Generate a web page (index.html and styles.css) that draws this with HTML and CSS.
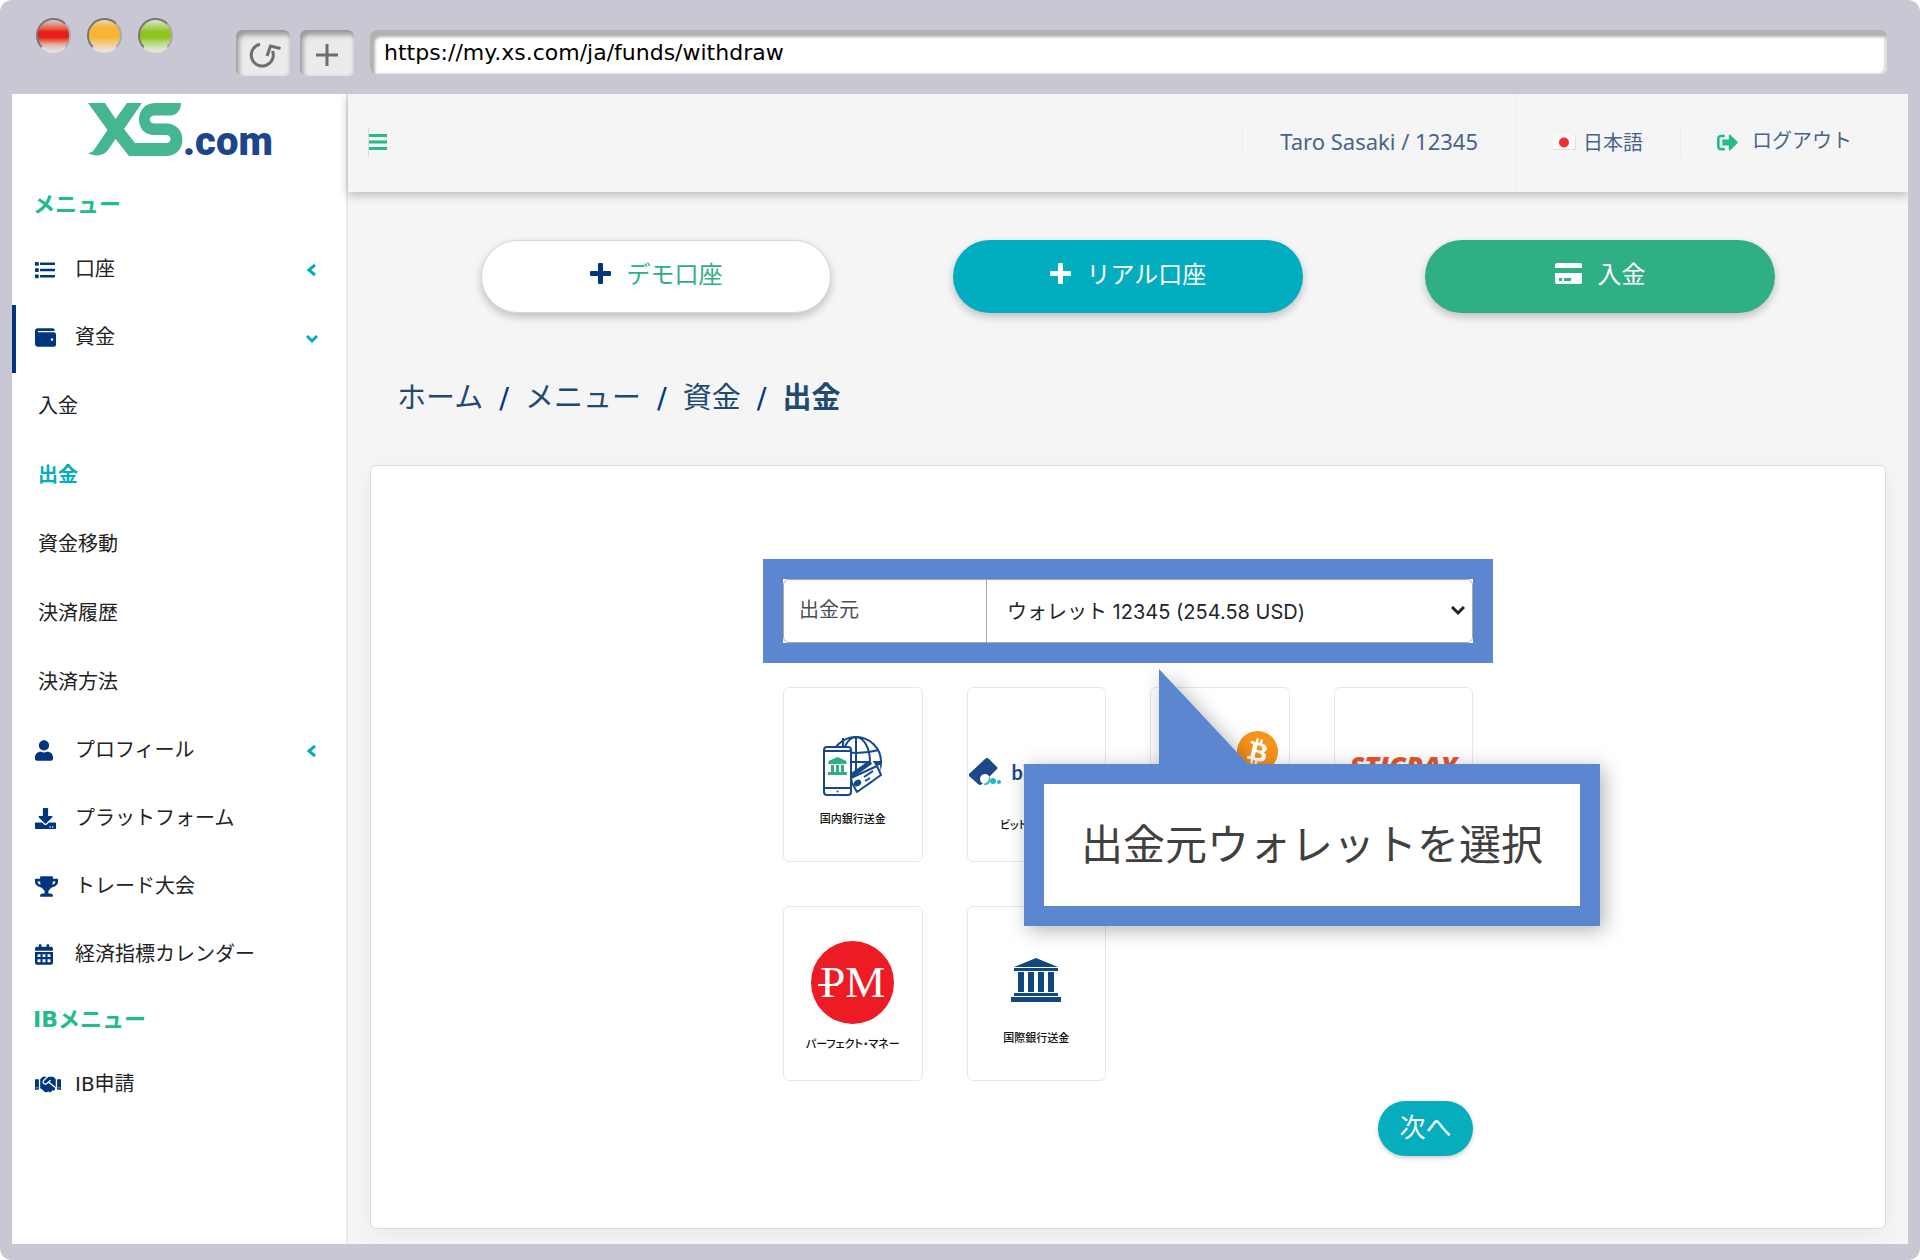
FILE: index.html
```html
<!DOCTYPE html>
<html lang="ja">
<head>
<meta charset="utf-8">
<meta name="viewport" content="width=device-width, initial-scale=1">
<title>出金 - XS.com</title>
<link rel="stylesheet" href="styles.css">
</head>
<body>
<div class="browser">
  <div class="chrome">
    <div class="lights">
      <span class="light light-red"></span>
      <span class="light light-yellow"></span>
      <span class="light light-green"></span>
    </div>
    <div class="chrome-tools">
      <button class="tool" type="button" aria-label="再読み込み">
        <svg width="36" height="28" viewBox="0 0 36 28" fill="none" stroke="#6e6e6e" stroke-width="3"><path d="M15 3.300A11 11 0 1 0 27.500 10"/><path d="M22 15l3.500-10 10 2.500"/></svg>
      </button>
      <button class="tool" type="button" aria-label="新しいタブ">
        <svg width="22" height="22" viewBox="0 0 22 22" fill="none" stroke="#6e6e6e" stroke-width="3"><path d="M11 0v22M0 11h22"/></svg>
      </button>
    </div>
    <input class="address" type="text" aria-label="アドレス" value="https://my.xs.com/ja/funds/withdraw">
  </div>

  <div class="page">
    <aside class="sidebar">
      <a class="brand" href="#" aria-label="XS.com">
        <svg class="brand-mark" width="95" height="53" viewBox="0 0 95 53" fill="#46b691"><path d="M0 0H17L27.500 16 39 0H54L36 26 47 40H78C84 40 84 32 78 32H65C46 32 46 0 67 0H93C93 8 88 12.500 82 12.500H67C60 12.500 60 20.500 67 20.500H78C100 20.500 100 53 78 53H41L27.500 36 20 47C16 53 7 54 0 50C4 50 6 47 8 44L19.500 27Z"/></svg>
        <span class="brand-name">.com</span>
      </a>
      <h2 class="menu-title">メニュー</h2>
      <nav>
        <ul class="menu">
          <li><a class="menu-link" href="#">
            <span class="menu-icon"><svg width="21" height="20" viewBox="0 0 512 512" preserveAspectRatio="xMinYMid"><path d="M80 368H16a16 16 0 0 0-16 16v64a16 16 0 0 0 16 16h64a16 16 0 0 0 16-16v-64a16 16 0 0 0-16-16zm0-320H16A16 16 0 0 0 0 64v64a16 16 0 0 0 16 16h64a16 16 0 0 0 16-16V64a16 16 0 0 0-16-16zm0 160H16a16 16 0 0 0-16 16v64a16 16 0 0 0 16 16h64a16 16 0 0 0 16-16v-64a16 16 0 0 0-16-16zm416 176H144a16 16 0 0 0-16 16v32a16 16 0 0 0 16 16h352a16 16 0 0 0 16-16v-32a16 16 0 0 0-16-16zm0-320H144a16 16 0 0 0-16 16v32a16 16 0 0 0 16 16h352a16 16 0 0 0 16-16V80a16 16 0 0 0-16-16zm0 160H144a16 16 0 0 0-16 16v32a16 16 0 0 0 16 16h352a16 16 0 0 0 16-16v-32a16 16 0 0 0-16-16z"/></svg></span>
            <span class="menu-text">口座</span>
            <svg class="caret" width="14" height="14" viewBox="0 0 14 14"><path d="M10 2L4 7l6 5"/></svg>
          </a></li>
          <li><a class="menu-link is-open" href="#">
            <span class="menu-icon"><svg width="21" height="21" viewBox="0 0 512 512"><path d="M461.200 128H80c-8.840 0-16-7.160-16-16s7.160-16 16-16h384c8.840 0 16-7.160 16-16 0-26.510-21.490-48-48-48H64C28.650 32 0 60.650 0 96v320c0 35.350 28.650 64 64 64h397.200c28.020 0 50.800-21.530 50.800-48V176c0-26.470-22.780-48-50.800-48zM416 336c-17.670 0-32-14.330-32-32s14.330-32 32-32 32 14.330 32 32-14.330 32-32 32z"/></svg></span>
            <span class="menu-text">資金</span>
            <svg class="caret" width="14" height="14" viewBox="0 0 14 14"><path d="M2 5l5 5 5-5"/></svg>
          </a>
            <ul class="submenu">
              <li><a href="#">入金</a></li>
              <li><a class="is-current" href="#" aria-current="page">出金</a></li>
              <li><a href="#">資金移動</a></li>
              <li><a href="#">決済履歴</a></li>
              <li><a href="#">決済方法</a></li>
            </ul>
          </li>
          <li><a class="menu-link" href="#">
            <span class="menu-icon"><svg width="18" height="21" viewBox="0 0 448 512"><path d="M224 256c70.700 0 128-57.300 128-128S294.700 0 224 0 96 57.300 96 128s57.300 128 128 128zm89.600 32h-16.700c-22.200 10.200-46.900 16-72.900 16s-50.600-5.800-72.900-16h-16.700C60.200 288 0 348.200 0 422.400V464c0 26.500 21.500 48 48 48h352c26.500 0 48-21.500 48-48v-41.600c0-74.200-60.200-134.400-134.400-134.400z"/></svg></span>
            <span class="menu-text">プロフィール</span>
            <svg class="caret" width="14" height="14" viewBox="0 0 14 14"><path d="M10 2L4 7l6 5"/></svg>
          </a></li>
          <li><a class="menu-link" href="#">
            <span class="menu-icon"><svg width="21" height="21" viewBox="0 0 512 512"><path d="M216 0h80c13.300 0 24 10.700 24 24v168h87.700c17.800 0 26.700 21.500 14.100 34.100L269.700 378.300c-7.500 7.500-19.800 7.500-27.300 0L90.100 226.100c-12.600-12.600-3.700-34.100 14.100-34.100H192V24c0-13.300 10.700-24 24-24zm296 376v112c0 13.300-10.700 24-24 24H24c-13.300 0-24-10.700-24-24V376c0-13.300 10.700-24 24-24h146.700l49 49c20.100 20.100 52.500 20.100 72.600 0l49-49H488c13.300 0 24 10.700 24 24zm-124 88c0-11-9-20-20-20s-20 9-20 20 9 20 20 20 20-9 20-20zm64 0c0-11-9-20-20-20s-20 9-20 20 9 20 20 20 20-9 20-20z"/></svg></span>
            <span class="menu-text">プラットフォーム</span>
          </a></li>
          <li><a class="menu-link" href="#">
            <span class="menu-icon"><svg width="23" height="21" viewBox="0 0 576 512"><path d="M552 64H448V24c0-13.300-10.700-24-24-24H152c-13.300 0-24 10.700-24 24v40H24C10.700 64 0 74.700 0 88v56c0 35.700 22.500 72.400 61.900 100.700 31.500 22.700 69.800 37.100 110 41.700C203.300 338.500 240 360 240 360v72h-48c-35.300 0-64 20.700-64 56v12c0 6.600 5.400 12 12 12h296c6.600 0 12-5.400 12-12v-12c0-35.300-28.700-56-64-56h-48v-72s36.700-21.500 68.100-73.600c40.300-4.600 78.600-19 110-41.700 39.300-28.300 61.900-65 61.900-100.700V88c0-13.300-10.700-24-24-24zM99.300 192.800C74.900 175.200 64 155.600 64 144v-16h64.200c1 32.600 5.800 61.200 12.800 86.200-15.100-5.200-29.200-12.400-41.700-21.400zM512 144c0 16.100-17.700 36.100-35.300 48.800-12.500 9-26.700 16.200-41.800 21.400 7-25 11.800-53.600 12.800-86.200H512v16z"/></svg></span>
            <span class="menu-text">トレード大会</span>
          </a></li>
          <li><a class="menu-link" href="#">
            <span class="menu-icon"><svg width="18" height="21" viewBox="0 0 448 512"><path fill-rule="evenodd" d="M0 192h448v272a48 48 0 0 1-48 48H48a48 48 0 0 1-48-48zM64 248v72h72v-72zm124 0v72h72v-72zm124 0v72h72v-72zM64 376v72h72v-72zm124 0v72h72v-72zm124 0v72h72v-72z"/><path d="M448 160v-48a48 48 0 0 0-48-48h-48V12a12 12 0 0 0-12-12h-40a12 12 0 0 0-12 12v52H160V12a12 12 0 0 0-12-12h-40a12 12 0 0 0-12 12v52H48A48 48 0 0 0 0 112v48z"/></svg></span>
            <span class="menu-text">経済指標カレンダー</span>
          </a></li>
        </ul>
        <h2 class="menu-title menu-title-ib">IBメニュー</h2>
        <ul class="menu">
          <li><a class="menu-link" href="#">
            <span class="menu-icon"><svg width="26" height="21" viewBox="0 0 640 512"><path d="M434.700 64h-85.900c-8 0-15.700 3-21.600 8.400l-98.300 90c-.1.1-.2.3-.3.4-16.600 15.600-16.300 40.500-2.100 56 12.700 13.900 39.400 17.600 56.100 2.700.1-.1.3-.1.4-.2l79.900-73.200c6.500-5.900 16.700-5.500 22.600 1 6 6.500 5.500 16.600-1 22.600l-26.100 23.900L504 313.800c2.900 2.400 5.500 5 7.900 7.700V128l-54.600-54.600c-5.900-6-14.100-9.400-22.600-9.400zM544 128.200v223.900c0 17.700 14.300 32 32 32h64V128.200h-96zm48 223.900c-8.800 0-16-7.200-16-16s7.200-16 16-16 16 7.200 16 16-7.200 16-16 16zM0 384h64c17.700 0 32-14.300 32-32V128.200H0V384zm48-63.900c8.800 0 16 7.200 16 16s-7.200 16-16 16-16-7.200-16-16c0-8.900 7.200-16 16-16zm435.900 18.600L334.600 217.500l-30 27.500c-29.700 27.100-75.200 24.500-101.700-4.400-26.900-29.400-24.800-74.900 4.400-101.700L289.100 64h-83.800c-8.500 0-16.600 3.400-22.600 9.400L128 128v223.900h18.300l90.500 81.900c27.400 22.300 67.700 18.100 90-9.300l.2-.2 17.900 15.500c15.900 13 39.400 10.500 52.300-5.400l31.400-38.600 5.400 4.400c13.700 11.100 33.900 9.100 45-4.700l9.500-11.700c11.200-13.800 9.100-33.900-4.600-45.100z"/></svg></span>
            <span class="menu-text">IB申請</span>
          </a></li>
        </ul>
      </nav>
    </aside>

    <div class="main">
      <header class="topbar">
        <button class="burger" type="button" aria-label="メニューを開閉">
          <svg width="18" height="16" viewBox="0 0 18 16" fill="#22bb8d"><path d="M0 0h18v3H0zM0 6.500h18v3H0zM0 13h18v3H0z"/></svg>
        </button>
        <div class="account">Taro Sasaki / 12345</div>
        <a class="language" href="#">
          <svg width="23" height="15" viewBox="0 0 23 15"><rect width="23" height="15" fill="#e2e2e2"/><rect width="22" height="14" fill="#fbfbfb"/><circle cx="11" cy="7.500" r="5" fill="#f03030"/></svg>
          <span>日本語</span>
        </a>
        <a class="logout" href="#">
          <svg width="21" height="21" viewBox="0 0 512 512" fill="#22bb8d"><path d="M497 273L329 441c-15 15-41 4.500-41-17v-96H152c-13.300 0-24-10.700-24-24v-96c0-13.300 10.700-24 24-24h136V88c0-21.400 25.900-32 41-17l168 168c9.300 9.400 9.300 24.600 0 34zM192 436v-40c0-6.600-5.400-12-12-12H96c-17.700 0-32-14.300-32-32V160c0-17.700 14.300-32 32-32h84c6.600 0 12-5.400 12-12V76c0-6.600-5.400-12-12-12H96c-53 0-96 43-96 96v192c0 53 43 96 96 96h84c6.600 0 12-5.400 12-12z"/></svg>
          <span>ログアウト</span>
        </a>
      </header>

      <main class="content">
        <div class="actions">
          <button class="pill pill-demo" type="button">
            <svg width="21" height="21" viewBox="0 0 21 21" fill="#003580"><path d="M9 0h3q1 0 1 1v7h7q1 0 1 1v3q0 1-1 1h-7v7q0 1-1 1H9q-1 0-1-1v-7H1q-1 0-1-1V9q0-1 1-1h7V1q0-1 1-1z"/></svg>
            <span>デモ口座</span>
          </button>
          <button class="pill pill-real" type="button">
            <svg width="21" height="21" viewBox="0 0 21 21" fill="#fff"><path d="M9 0h3q1 0 1 1v7h7q1 0 1 1v3q0 1-1 1h-7v7q0 1-1 1H9q-1 0-1-1v-7H1q-1 0-1-1V9q0-1 1-1h7V1q0-1 1-1z"/></svg>
            <span>リアル口座</span>
          </button>
          <button class="pill pill-deposit" type="button">
            <svg width="27" height="21" viewBox="0 0 27 21" fill="#fff"><path d="M2 0h23q2 0 2 2v3H0V2Q0 0 2 0z"/><path fill-rule="evenodd" d="M0 10h27v9q0 2-2 2H2q-2 0-2-2zM4 15v3h3v-3zm5 0v3h7v-3z"/></svg>
            <span>入金</span>
          </button>
        </div>

        <nav aria-label="パンくずリスト">
          <ol class="crumbs">
            <li><a href="#">ホーム</a></li>
            <li><a href="#">メニュー</a></li>
            <li><a href="#">資金</a></li>
            <li class="crumb-current" aria-current="page">出金</li>
          </ol>
        </nav>

        <section class="card">
          <form class="withdraw">
            <div class="source">
              <label for="wallet">出金元</label>
              <select id="wallet">
                <option>ウォレット 12345 (254.58 USD)</option>
              </select>
              <svg class="select-arrow" width="14" height="10" viewBox="0 0 14 10" fill="none" stroke="#222" stroke-width="3"><path d="M1 1l6 6 6-6"/></svg>
            </div>

            <div class="methods">
              <button class="method method-local" type="button">
                <svg width="60" height="60" viewBox="0 0 60 60">
                  <g fill="none" stroke="#17498a" stroke-width="2"><circle cx="33" cy="26" r="25"/><ellipse cx="33" cy="26" rx="14" ry="25"/><path d="M33 1v50M10 14q23 6 46 0M28 26h31M20 48V2"/></g>
                  <path d="M28 26h30q1 6-2 12L48 28z" fill="#17498a"/>
                  <path d="M26 40L49 24l4 6 4-1 1 9-24 18-8-2z" fill="#fff"/>
                  <path d="M28 42L54 30l4 9-24 17-5-9z" fill="#fff" stroke="#17498a" stroke-width="2" stroke-linejoin="round"/>
                  <path d="M28 37l19-13 2 4-21 15z" fill="#17498a"/>
                  <ellipse cx="34.500" cy="47" rx="4" ry="3" transform="rotate(-35 34.500 47)" fill="#17498a"/>
                  <path d="M41 41l9-6M42 45l5-3" stroke="#17498a" stroke-width="2"/>
                  <rect x="1" y="11" width="27" height="48" rx="3" fill="#fff" stroke="#17498a" stroke-width="2"/>
                  <path d="M1 15h27M1 52h27" stroke="#17498a" stroke-width="2"/><circle cx="14.500" cy="55.500" r="1" fill="#17498a"/>
                  <path d="M14.500 21l9 4v3h-18v-3zM8 29h3v7H8zm5 0h3v7h-3zm5 0h3v7h-3zM5 36h19v3H5z" fill="#2fae84"/>
                </svg>
                <span class="method-name">国内銀行送金</span>
              </button>
              <button class="method method-bitwallet" type="button">
                <span class="bitwallet-logo">
                  <svg width="32" height="28" viewBox="0 0 32 28"><path d="M16 1q2-2 4 0l8 8q1 1 0 2L13 26q-2 2-4 0L0 18q-1-1 0-2z" fill="#1f478a"/><circle cx="16" cy="21" r="5" fill="#fff"/><path d="M14 26q6-1 6-7h1v4q-1 4-5 4z" fill="#23b6c6"/><circle cx="24" cy="23" r="3" fill="#23b6c6"/><circle cx="30" cy="24" r="2" fill="#23b6c6"/></svg>
                  bitwallet
                </span>
                <span class="method-name">ビットウォレット</span>
              </button>
              <button class="method method-crypto" type="button" aria-label="仮想通貨">
                <svg width="41" height="41" viewBox="0 0 40 40"><circle cx="20" cy="20" r="20" fill="#f7931a"/><path fill-rule="evenodd" fill="#fff" d="M29 17.500c.4-2.700-1.700-4.200-4.500-5.200l.9-3.700-2.200-.6-.9 3.600-1.800-.4.900-3.700-2.200-.5-1 3.700-4.500-1.100-.6 2.400s1.700.4 1.600.4c.9.2 1.100.8 1 1.300L13.200 24c-.1.300-.4.700-1.100.5l-1.600-.4-1.100 2.600 4.300 1.100-.9 3.700 2.200.6.900-3.700 1.800.5-.9 3.600 2.200.6.900-3.700c3.900.7 6.800.4 8-3.100 1-2.800 0-4.400-2.100-5.500 1.500-.3 2.600-1.300 3.200-2.700zm-5 7.300c-.7 2.800-5.400 1.300-6.900.9l1.200-4.900c1.500.4 6.400 1.100 5.700 4zm.8-7.300c-.7 2.500-4.600 1.200-5.800.9l1.100-4.400c1.300.3 5.400.9 4.700 3.500z"/></svg>
              </button>
              <button class="method method-sticpay" type="button">
                <span class="sticpay-logo">STICPAY</span>
              </button>
              <button class="method method-pm" type="button">
                <span class="pm-logo">PM</span>
                <span class="method-name">パーフェクト・マネー</span>
              </button>
              <button class="method method-bank" type="button">
                <svg width="50" height="44" viewBox="0 0 50 44" fill="#10477f"><path d="M25 0l22 9H3zM3 10h44v3H3zM7 14h6v20H7zm10 0h6v20h-6zm10 0h6v20h-6zm10 0h6v20h-6zM3 35h44v3H3zM0 39h50v5H0z"/></svg>
                <span class="method-name">国際銀行送金</span>
              </button>
            </div>

            <button class="next" type="submit">次へ</button>

            <div class="callout" role="note">
              <svg class="callout-tail" width="89" height="95" viewBox="0 0 89 95" fill="#5c87d0"><path d="M0 0v95h89z"/></svg>
              出金元ウォレットを選択
            </div>
          </form>
        </section>
      </main>
    </div>
  </div>
</div>
</body>
</html>
```
FILE: styles.css
```css
* { box-sizing: border-box; }

body {
  margin: 0;
  background: #fff;
  color: #222;
  font-family: "DejaVu Sans", "Noto Sans CJK JP", sans-serif;
  font-size: 20px;
}

button, input, select { font-family: inherit; }
button { cursor: pointer; }
a { color: inherit; text-decoration: none; }
ul, ol { list-style: none; margin: 0; padding: 0; }

/* Browser frame */
.browser {
  display: flex;
  flex-direction: column;
  min-height: 100vh;
  padding: 0 12px 16px;
  border-radius: 12px;
  background: #c8c7d3;
}
.chrome {
  display: flex;
  align-items: flex-start;
  height: 94px;
  padding: 30px 21px 0 24px;
}
.lights {
  display: flex;
  gap: 16px;
  margin-top: -12px;
  width: 200px;
}
.light {
  width: 35px;
  height: 35px;
  border: 2px solid;
  border-color: #777 #aaa #e0e0e0 #777;
  border-radius: 50%;
}
.light-red { background: linear-gradient(#d9cfcb, #e4553a 30%, #e81c1c 38%, #e81c1c 56%, #e4553a 64%, #e5b5ab 80%, #e6dedd); }
.light-yellow { background: linear-gradient(#e5d9bd, #f8b536 24%, #f8b536 56%, #f2cb83 74%, #ece5d8); }
.light-green { background: linear-gradient(#dce6cb, #a0cc45 30%, #8fc31f 38%, #8fc31f 56%, #b6d878 72%, #e4ebd9); }
.chrome-tools { display: flex; gap: 10px; }
.tool {
  display: grid;
  place-items: center;
  width: 54px;
  height: 46px;
  padding: 4px 0 0;
  border: 0;
  border-radius: 6px;
  background: #ebebeb;
  box-shadow: inset 3px 5px 5px #999, inset -2px -1px 2px #ddd;
}
.address {
  flex: 1;
  min-width: 0;
  height: 44px;
  margin-left: 16px;
  padding: 2px 14px;
  border: 0;
  border-radius: 6px;
  background: #fff;
  box-shadow: inset 5px 7px 3px #b2b2b2, inset -3px -1px 2px #ddd;
  color: #000;
  font-size: 22px;
}

/* Page shell */
.page {
  display: flex;
  flex: 1;
  background: #f5f5f5;
}
.sidebar {
  flex: 0 0 336px;
  border-right: 2px solid #e8e8e8;
  background: #fff;
}
.main {
  display: flex;
  flex: 1;
  flex-direction: column;
  min-width: 0;
}

/* Sidebar */
.brand {
  display: flex;
  align-items: flex-end;
  height: 62px;
  padding-left: 76px;
}
.brand-name {
  color: #1d458b;
  font-family: Roboto, sans-serif;
  font-size: 40px;
  font-weight: 900;
  line-height: 29px;
}
.menu-title {
  margin: 0;
  padding: 32px 0 16px 21px;
  color: #22bb8d;
  font-size: 22px;
  font-weight: 700;
  line-height: 33px;
}
.menu-title-ib { padding-top: 13px; }
.menu-link {
  display: flex;
  align-items: center;
  height: 68px;
  padding: 0 27px 3px 19px;
  border-left: 4px solid transparent;
}
.menu-link.is-open { border-left-color: #003580; }
.menu-icon {
  display: flex;
  width: 40px;
  fill: #003580;
}
.menu-text {
  flex: 1;
  padding-bottom: 4px;
}
.caret {
  fill: none;
  stroke: #04adbd;
  stroke-width: 3;
}
.submenu a {
  display: flex;
  align-items: center;
  height: 69px;
  padding: 0 0 6px 26px;
}
.submenu .is-current {
  color: #04adbd;
  font-weight: 700;
}

/* Top bar */
.topbar {
  position: relative;
  display: flex;
  align-items: center;
  height: 98px;
  padding: 0 56px 2px 20px;
  background: #f5f5f5;
  box-shadow: 0 3px 10px rgba(0, 0, 0, .25);
  clip-path: inset(0 0 -24px -12px);
  color: #4a6489;
}
.topbar span { padding-bottom: 2px; }
.burger {
  display: flex;
  margin-right: auto;
  padding: 7px 0;
  border: 0;
  border-left: 1px solid #ddd;
  background: none;
}
.account {
  padding: 0 37px 2px;
  border-left: 1px solid #ececec;
  font-family: "Noto Sans", sans-serif;
  font-size: 22px;
  line-height: 28px;
}
.language {
  display: flex;
  align-items: center;
  align-self: stretch;
  gap: 7px;
  padding: 0 37px;
  border-left: 1px solid #ececec;
}
.logout {
  display: flex;
  align-items: center;
  gap: 14px;
  padding-left: 36px;
  border-left: 1px solid #ececec;
  line-height: 28px;
}

/* Content */
.content {
  display: flex;
  flex: 1;
  flex-direction: column;
  padding: 48px 22px 15px;
}
.actions {
  display: grid;
  grid-template-columns: repeat(3, 350px);
  justify-content: center;
  gap: 122px;
}
.pill {
  display: flex;
  align-items: center;
  justify-content: center;
  gap: 16px;
  height: 73px;
  padding: 0 0 6px;
  border: 1px solid transparent;
  border-radius: 37px;
  box-shadow: 0 4px 8px rgba(0, 0, 0, .22);
  color: #fff;
  font-size: 24px;
}
.pill span { padding-bottom: 3px; }
.pill-demo {
  border-color: #d3d8e2;
  background: #fff;
  color: #30ae84;
}
.pill-real { background: #02adbf; }
.pill-deposit { background: #30ae84; }

.crumbs {
  display: flex;
  margin: 65px 0 47px 27px;
  color: #1f4b73;
  font-size: 29px;
  line-height: 40px;
}
.crumbs li + li::before {
  content: "/";
  padding: 0 16px;
  color: #003580;
  font-weight: 400;
}
.crumb-current { font-weight: 700; }

.card {
  flex: 1;
  padding: 113px 24px 72px;
  border: 1px solid #d7dbe3;
  border-radius: 6px;
  background: #fff;
  box-shadow: 0 6px 24px rgba(0, 0, 0, .05);
}
.withdraw {
  position: relative;
  display: flex;
  flex-direction: column;
  max-width: 690px;
  margin: 0 auto;
}

/* Wallet picker */
.source {
  position: relative;
  display: flex;
  align-items: center;
  height: 64px;
  border: 1px solid #a9a9a9;
  border-radius: 6px;
}
.source::before {
  content: "";
  position: absolute;
  inset: -21px;
  border: 20px solid #5c87d0;
  pointer-events: none;
}
.source label {
  flex: 0 0 202px;
  padding: 0 0 5px 15px;
  color: #495057;
}
.source select {
  flex: 1;
  align-self: stretch;
  min-width: 0;
  padding: 2px 20px 0;
  border: 0;
  border-left: 1px solid #a9a9a9;
  border-radius: 0 6px 6px 0;
  background: #fff;
  appearance: none;
  color: #212529;
  font-family: Inter, "Noto Sans CJK JP", sans-serif;
  font-size: 20px;
}
.select-arrow {
  position: absolute;
  right: 7px;
  pointer-events: none;
}

/* Payment methods */
.methods {
  display: grid;
  grid-template-columns: repeat(4, 1fr);
  gap: 44px;
  margin-top: 44px;
}
.method {
  display: flex;
  flex-direction: column;
  align-items: center;
  min-width: 0;
  height: 175px;
  padding: 0;
  border: 1px solid #e6e7ec;
  border-radius: 6px;
  background: #fff;
  overflow: hidden;
}
.method-name {
  color: #111;
  font-family: "Noto Sans CJK JP", sans-serif;
  font-size: 11px;
  font-weight: 500;
  line-height: 16px;
  font-feature-settings: "palt";
  white-space: nowrap;
}
.method-local { padding-top: 48px; gap: 14px; }
.method-bitwallet { padding-top: 70px; gap: 30px; }
.bitwallet-logo {
  display: flex;
  align-items: center;
  align-self: flex-start;
  gap: 11px;
  padding-left: 1px;
  color: #1f478a;
  font-family: Lato, sans-serif;
  font-size: 20px;
  font-weight: 700;
  line-height: 28px;
}
.method-crypto {
  align-items: flex-end;
  padding: 43px 11px 0 0;
}
.method-sticpay { padding-top: 64px; }
.sticpay-logo {
  color: #e8562a;
  font-family: "Open Sans", sans-serif;
  font-size: 27px;
  font-style: italic;
  font-weight: 800;
  line-height: 28px;
}
.method-pm { padding-top: 34px; gap: 11px; }
.pm-logo {
  position: relative;
  width: 83px;
  height: 83px;
  border-radius: 50%;
  background: #ed1c24;
  color: #fff;
  font-family: "Liberation Serif", serif;
  font-size: 45px;
  line-height: 83px;
}
.pm-logo::before {
  content: "";
  position: absolute;
  top: 43px;
  left: 7px;
  width: 20px;
  height: 2px;
  background: #fff;
}
.method-bank { padding-top: 51px; gap: 27px; }

.next {
  align-self: flex-end;
  width: 95px;
  height: 55px;
  margin-top: 20px;
  padding: 0 0 6px;
  border: 0;
  border-radius: 28px;
  background: #06adbd;
  box-shadow: 0 2px 4px rgba(0, 0, 0, .2);
  color: #fff;
  font-size: 26px;
}

/* Guide balloon over the form */
.callout {
  position: absolute;
  top: 185px;
  left: 241px;
  padding: 32px 37px 30px;
  border: 20px solid #5c87d0;
  background: #fff;
  filter: drop-shadow(4px 4px 10px rgba(0, 0, 0, .3));
  color: #404040;
  font-size: 42px;
  line-height: 60px;
  white-space: nowrap;
}
.callout-tail {
  position: absolute;
  top: -115px;
  left: 115px;
}
```
